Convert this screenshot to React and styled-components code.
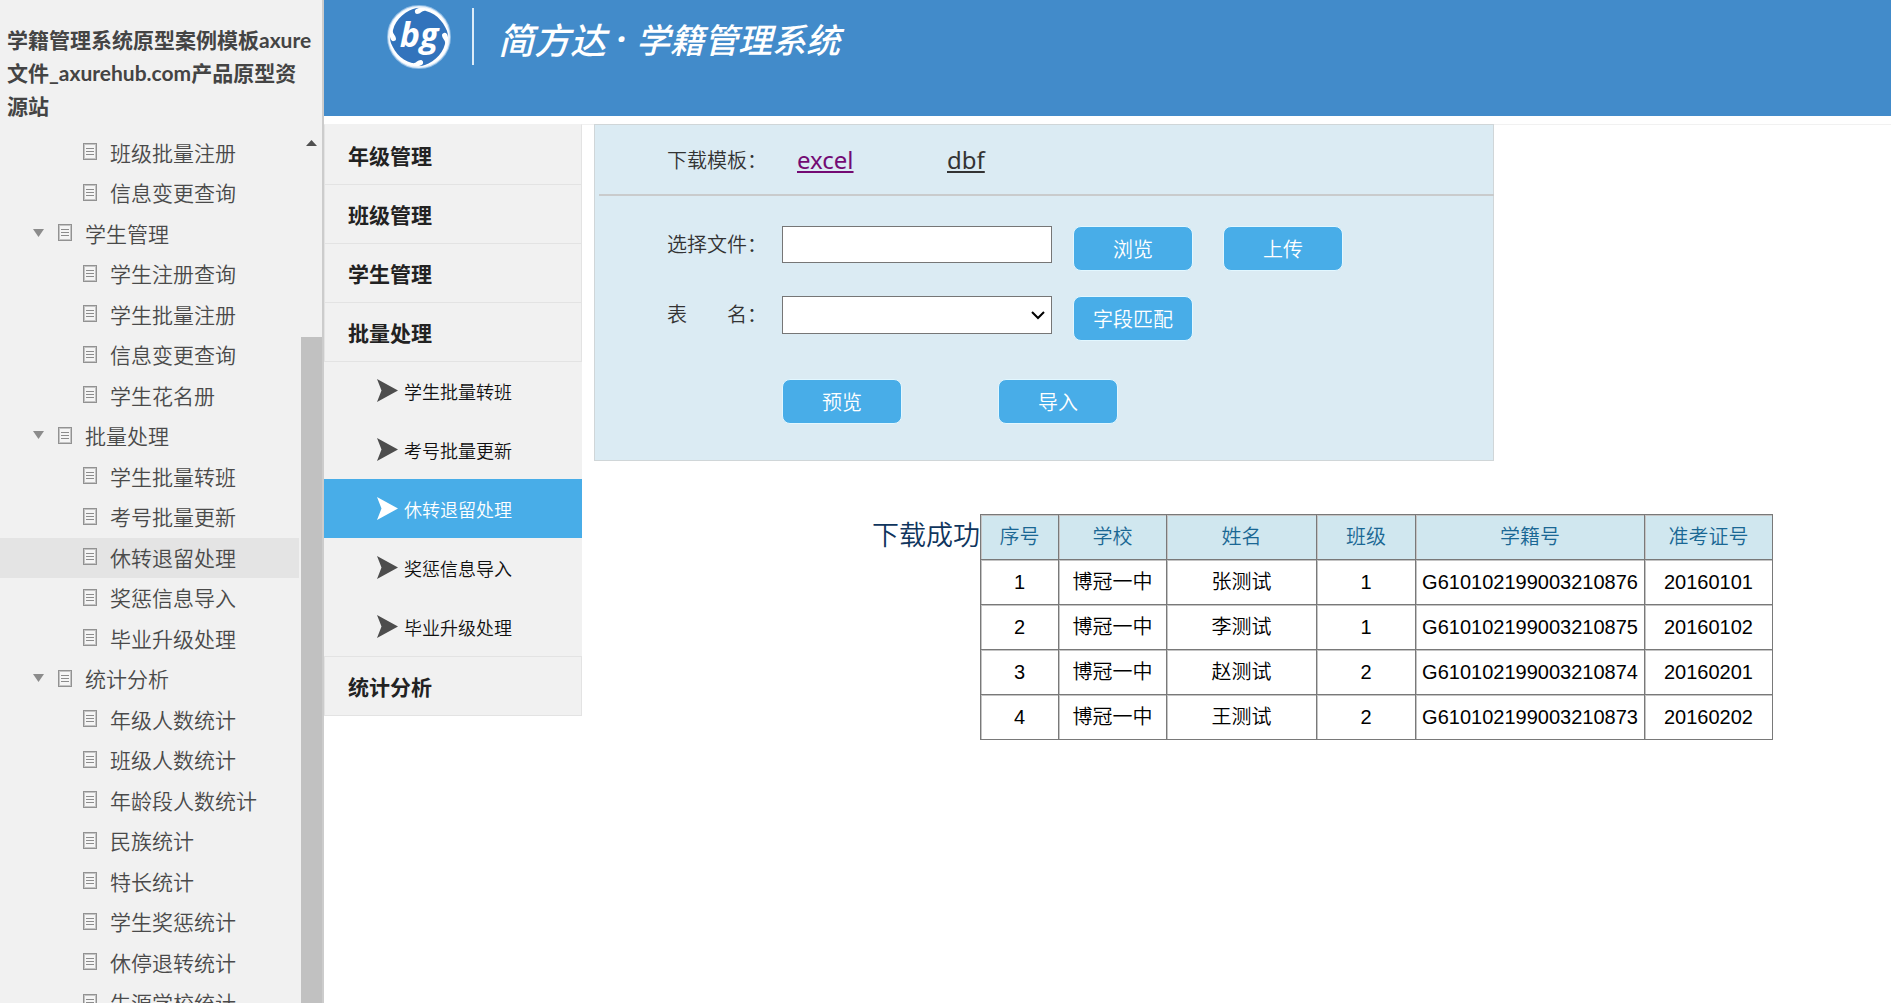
import React from "react";
import styled, { createGlobalStyle } from "styled-components";

const GlobalStyle = createGlobalStyle`
  * {
    box-sizing: border-box;
    margin: 0;
    padding: 0;
  }

  body {
    background: white;
    font-family: "Noto Sans", "Noto Sans CJK SC", sans-serif;
  }

  a {
    color: inherit;
  }
`;

const StyledPage = styled.div`
  display: flex;
  height: 100vh;
  overflow: hidden;
`;

/* sitemap on the left */

const StyledSitemap = styled.aside`
  display: flex;
  flex-direction: column;
  flex: 0 0 324px;
  background: #f1f1f1;
  border-right: 2px solid #cccccc;
  color: #4a4a4a;
`;

const StyledSitemapTitle = styled.h1`
  padding: 23px 7px 11px;
  font-family: Lato, "Noto Sans CJK SC", sans-serif;
  font-size: 21px;
  line-height: 33px;
  font-weight: 700;
  color: #444444;
`;

const StyledSitemapBody = styled.div`
  display: flex;
  flex: 1;
  min-height: 0;
`;

const StyledTree = styled.ul`
  flex: 1;
  margin-right: 2px;
  overflow: hidden;
  list-style: none;
`;

const StyledTreeItem = styled.li`
  height: 40px;
  padding-left: ${(props) => (props.$group ? "33px" : "83px")};
  background: ${(props) => (props.$selected ? "#e4e4e4" : "transparent")};

  &:nth-child(even) {
    height: 41px;
  }
`;

const StyledTreeLink = styled.a`
  display: flex;
  align-items: center;
  gap: 13px;
  height: 100%;
  padding-bottom: 3px;
  font-family: "Noto Sans CJK SC", sans-serif;
  font-size: 21px;
  font-weight: 350;
  text-decoration: none;
  white-space: nowrap;

  svg {
    flex: none;
  }
`;

const StyledScrollbar = styled.div`
  display: flex;
  flex-direction: column;
  align-items: center;
  width: 21px;
  padding-top: 7px;
`;

const StyledThumb = styled.div`
  flex: 1;
  width: 100%;
  margin-top: 191px;
  background: #c1c1c1;
`;

/* header */

const StyledContent = styled.div`
  flex: 1;
  min-width: 0;
`;

const StyledHeader = styled.header`
  display: flex;
  align-items: flex-start;
  height: 116px;
  padding: 4px 0 0 62px;
  background: #428bca;
  color: white;
`;

const StyledHeaderLine = styled.span`
  width: 2px;
  height: 57px;
  margin: 4px 24px 0 20px;
  background: #dcebf7;
`;

const StyledBrand = styled.div`
  display: flex;
  align-items: center;
  height: 68px;
  font-family: "Noto Sans CJK SC", sans-serif;
  font-size: 34px;
  font-style: italic;
  font-weight: 500;
  white-space: nowrap;
`;

const StyledBrandName = styled.strong`
  font-size: 36px;
  font-weight: 500;
`;

const StyledBrandDot = styled.span`
  width: 30px;
  font-family: "Noto Sans", sans-serif;
  font-weight: 700;
  text-align: center;
`;

const StyledBody = styled.div`
  display: flex;
  align-items: flex-start;
  margin-top: 8px;
  border-top: 1px solid #f1f1f1;
`;

/* module menu */

const StyledMenu = styled.nav`
  flex: 0 0 258px;
  margin-top: -1px;
  background: #f1f1f1;
`;

const StyledMenuGroup = styled.a`
  display: flex;
  align-items: center;
  height: ${(props) => (props.$first ? "61px" : "60px")};
  margin-bottom: ${(props) => (props.$last ? "0" : "-1px")};
  padding-left: 23px;
  border: 1px solid #e3e3e3;
  border-top-color: ${(props) => (props.$first ? "transparent" : "#e3e3e3")};
  font-family: "Noto Sans CJK SC", sans-serif;
  font-size: 21px;
  line-height: 30px;
  font-weight: 700;
  text-decoration: none;
  color: #222222;
`;

const StyledMenuItem = styled.a`
  display: flex;
  align-items: center;
  gap: 6px;
  height: 59px;
  padding-left: 53px;
  background: ${(props) => (props.$active ? "#48ade8" : "transparent")};
  font-family: "Noto Sans CJK SC", sans-serif;
  font-size: 18px;
  font-weight: 350;
  text-decoration: none;
  color: ${(props) => (props.$active ? "white" : "#111111")};
`;

/* import form */

const StyledMain = styled.main`
  flex: 1;
  min-width: 0;
  margin: -1px 0 0 12px;
`;

const StyledPanel = styled.form`
  max-width: 900px;
  padding-bottom: 36px;
  border: 1px solid #d0d6d8;
  background: #dbebf3;
  color: #333333;
`;

const StyledTemplates = styled.div`
  display: grid;
  grid-template-columns: 130px 150px auto;
  justify-content: start;
  align-items: center;
  height: 71px;
  margin: 0 -1px 0 4px;
  padding-left: 68px;
  border-bottom: 2px solid #c9cbcc;
`;

const StyledLabel = styled.label`
  width: ${(props) => (props.$wide ? "130px" : "115px")};
  font-family: "Noto Sans CJK SC", sans-serif;
  font-size: 20px;
  font-weight: 350;
  line-height: 36px;
  white-space: pre;
`;

const StyledDownload = styled.a`
  justify-self: start;
  font-size: 24px;
  color: ${(props) => (props.$visited ? "#730a73" : "#333333")};
  text-decoration-thickness: 2px;
  text-underline-offset: 2px;
`;

const StyledFormRow = styled.div`
  display: flex;
  align-items: flex-start;
  height: 45px;
  margin-top: ${(props) => props.$top};
  padding-left: ${(props) => (props.$indent ? "187px" : "72px")};
`;

const StyledInput = styled.input`
  width: 270px;
  height: 37px;
  margin-right: 21px;
  padding: 0 8px;
  border: 1px solid #767676;
  background: white;
  font-size: 20px;
`;

const StyledSelectBox = styled.div`
  position: relative;
  width: 270px;
  margin-right: 21px;

  svg {
    position: absolute;
    top: 15px;
    right: 7px;
    pointer-events: none;
  }
`;

const StyledSelect = styled.select`
  display: block;
  width: 100%;
  height: 38px;
  padding: 0 8px;
  appearance: none;
  border: 1px solid #767676;
  border-radius: 0;
  background: white;
  font-size: 20px;
`;

const StyledButton = styled.button`
  width: 120px;
  height: 45px;
  margin-right: ${(props) => props.$gap || "30px"};
  border: 1px solid #e2f7ff;
  border-radius: 8px;
  background: #48ade8;
  color: white;
  font-family: "Noto Sans CJK SC", sans-serif;
  font-size: 20px;
  font-weight: 350;
`;

/* result */

const StyledResult = styled.section`
  display: flex;
  align-items: flex-start;
  margin: 53px 0 0 278px;
`;

const StyledStatus = styled.p`
  font-family: "Noto Sans CJK SC", sans-serif;
  font-size: 27px;
  font-weight: 350;
  line-height: 40px;
  white-space: nowrap;
  color: #0f355d;
`;

const StyledTable = styled.table`
  width: 792px;
  table-layout: fixed;
  border-collapse: collapse;
  font-family: "Liberation Sans", "Noto Sans CJK SC", sans-serif;
  font-size: 20px;
  font-weight: 350;
  line-height: 30px;
  color: #000000;
  text-align: center;
`;

const StyledCell = styled.td`
  height: 45px;
  border: 1px solid #797979;
  box-shadow: inset 1px 1px 0 #c4c4c4;
  white-space: nowrap;
`;

const StyledHeadCell = styled(StyledCell)`
  width: ${(props) => props.$width};
  background: #d0e7ef;
  color: #1a6794;
  font-weight: 350;
`;

const tree = [
  { name: "班级批量注册" },
  { name: "信息变更查询" },
  { name: "学生管理", group: true },
  { name: "学生注册查询" },
  { name: "学生批量注册" },
  { name: "信息变更查询" },
  { name: "学生花名册" },
  { name: "批量处理", group: true },
  { name: "学生批量转班" },
  { name: "考号批量更新" },
  { name: "休转退留处理", selected: true },
  { name: "奖惩信息导入" },
  { name: "毕业升级处理" },
  { name: "统计分析", group: true },
  { name: "年级人数统计" },
  { name: "班级人数统计" },
  { name: "年龄段人数统计" },
  { name: "民族统计" },
  { name: "特长统计" },
  { name: "学生奖惩统计" },
  { name: "休停退转统计" },
  { name: "生源学校统计" },
];

const menuGroups = ["年级管理", "班级管理", "学生管理", "批量处理"];

const menuItems = [
  "学生批量转班",
  "考号批量更新",
  "休转退留处理",
  "奖惩信息导入",
  "毕业升级处理",
];

const columns = [
  { name: "序号", width: "78px" },
  { name: "学校", width: "108px" },
  { name: "姓名", width: "150px" },
  { name: "班级", width: "99px" },
  { name: "学籍号", width: "229px" },
  { name: "准考证号", width: "128px" },
];

const students = [
  ["1", "博冠一中", "张测试", "1", "G610102199003210876", "20160101"],
  ["2", "博冠一中", "李测试", "1", "G610102199003210875", "20160102"],
  ["3", "博冠一中", "赵测试", "2", "G610102199003210874", "20160201"],
  ["4", "博冠一中", "王测试", "2", "G610102199003210873", "20160202"],
];

const Caret = () => (
  <svg width="12" height="8" viewBox="0 0 12 8">
    <path d="M0 0h11L5.5 8z" fill="#8c8c8c" />
  </svg>
);

const PageIcon = () => (
  <svg width="14" height="17" viewBox="0 0 14 17">
    <rect x="0.5" y="0.5" width="13" height="16" fill="#f5f5f5" stroke="#929292" />
    <rect x="1.5" y="1.5" width="11" height="14" fill="none" stroke="#c4c4c4" />
    <path d="M3 5.5h8M3 8.5h8M3 11.5h8" stroke="#8c8c8c" />
  </svg>
);

const Arrow = ({ color }) => (
  <svg width="21" height="23" viewBox="0 0 21 23">
    <path d="M0 0L21 11.5L0 23L4.5 11.5z" fill={color} />
  </svg>
);

const hook =
  "M-4 -25 C-5 -28 0 -30 6 -29 C20 -27 29 -15 30 -1 C26 -13 19 -23 7 -26 C3 -27 2 -23 -2 -23 C-3 -23 -4 -24 -4 -25 Z";

const Logo = () => (
  <svg width="66" height="66" viewBox="-33 -33 66 66">
    <circle r="31" fill="#3273bc" stroke="#8fbce4" strokeWidth="2" />
    <circle r="30" fill="none" stroke="#e4effa" strokeWidth="2" />
    {[0, 90, 180, 270].map((angle) => (
      <path key={angle} d={hook} fill="white" transform={`rotate(${angle})`} />
    ))}
    <text
      x="0"
      y="10"
      textAnchor="middle"
      fill="white"
      fontFamily="Open Sans, sans-serif"
      fontSize="34"
      fontStyle="italic"
      fontWeight="700"
    >
      bg
    </text>
  </svg>
);

const Sitemap = () => (
  <StyledSitemap>
    <StyledSitemapTitle>
      学籍管理系统原型案例模板axure文件_axurehub.com产品原型资源站
    </StyledSitemapTitle>
    <StyledSitemapBody>
      <StyledTree>
        {tree.map(({ name, group, selected }, index) => (
          <StyledTreeItem key={index} $group={group} $selected={selected}>
            <StyledTreeLink href="#">
              {group && <Caret />}
              <PageIcon />
              {name}
            </StyledTreeLink>
          </StyledTreeItem>
        ))}
      </StyledTree>
      <StyledScrollbar>
        <svg width="11" height="6" viewBox="0 0 11 6">
          <path d="M0 6L5.5 0L11 6z" fill="#505050" />
        </svg>
        <StyledThumb />
      </StyledScrollbar>
    </StyledSitemapBody>
  </StyledSitemap>
);

const Menu = () => (
  <StyledMenu>
    {menuGroups.map((name, index) => (
      <StyledMenuGroup key={name} href="#" $first={index === 0}>
        {name}
      </StyledMenuGroup>
    ))}
    {menuItems.map((name) => {
      const active = name === "休转退留处理";
      return (
        <StyledMenuItem key={name} href="#" $active={active}>
          <Arrow color={active ? "white" : "#4d4d4d"} />
          {name}
        </StyledMenuItem>
      );
    })}
    <StyledMenuGroup href="#" $last>
      统计分析
    </StyledMenuGroup>
  </StyledMenu>
);

const ImportForm = () => (
  <StyledPanel>
    <StyledTemplates>
      <StyledLabel as="span" $wide>
        下载模板：
      </StyledLabel>
      <StyledDownload href="#" $visited>
        excel
      </StyledDownload>
      <StyledDownload href="#">dbf</StyledDownload>
    </StyledTemplates>
    <StyledFormRow $top="30px">
      <StyledLabel htmlFor="file">选择文件：</StyledLabel>
      <StyledInput id="file" type="text" />
      <StyledButton type="button">浏览</StyledButton>
      <StyledButton type="button">上传</StyledButton>
    </StyledFormRow>
    <StyledFormRow $top="25px">
      <StyledLabel htmlFor="sheet">表　　名：</StyledLabel>
      <StyledSelectBox>
        <StyledSelect id="sheet" />
        <svg width="14" height="9" viewBox="0 0 14 9">
          <path d="M1 1l6 6l6 -6" fill="none" stroke="black" strokeWidth="2" />
        </svg>
      </StyledSelectBox>
      <StyledButton type="button">字段匹配</StyledButton>
    </StyledFormRow>
    <StyledFormRow $top="38px" $indent>
      <StyledButton type="button" $gap="96px">
        预览
      </StyledButton>
      <StyledButton type="button">导入</StyledButton>
    </StyledFormRow>
  </StyledPanel>
);

const Result = () => (
  <StyledResult>
    <StyledStatus>下载成功</StyledStatus>
    <StyledTable>
      <thead>
        <tr>
          {columns.map(({ name, width }) => (
            <StyledHeadCell as="th" key={name} $width={width}>
              {name}
            </StyledHeadCell>
          ))}
        </tr>
      </thead>
      <tbody>
        {students.map((student) => (
          <tr key={student[0]}>
            {student.map((value, index) => (
              <StyledCell key={index}>{value}</StyledCell>
            ))}
          </tr>
        ))}
      </tbody>
    </StyledTable>
  </StyledResult>
);

const App = () => {
  return (
    <StyledPage>
      <GlobalStyle />
      <Sitemap />
      <StyledContent>
        <StyledHeader>
          <Logo />
          <StyledHeaderLine />
          <StyledBrand>
            <StyledBrandName>简方达</StyledBrandName>
            <StyledBrandDot>·</StyledBrandDot>
            学籍管理系统
          </StyledBrand>
        </StyledHeader>
        <StyledBody>
          <Menu />
          <StyledMain>
            <ImportForm />
            <Result />
          </StyledMain>
        </StyledBody>
      </StyledContent>
    </StyledPage>
  );
};

export default App;
